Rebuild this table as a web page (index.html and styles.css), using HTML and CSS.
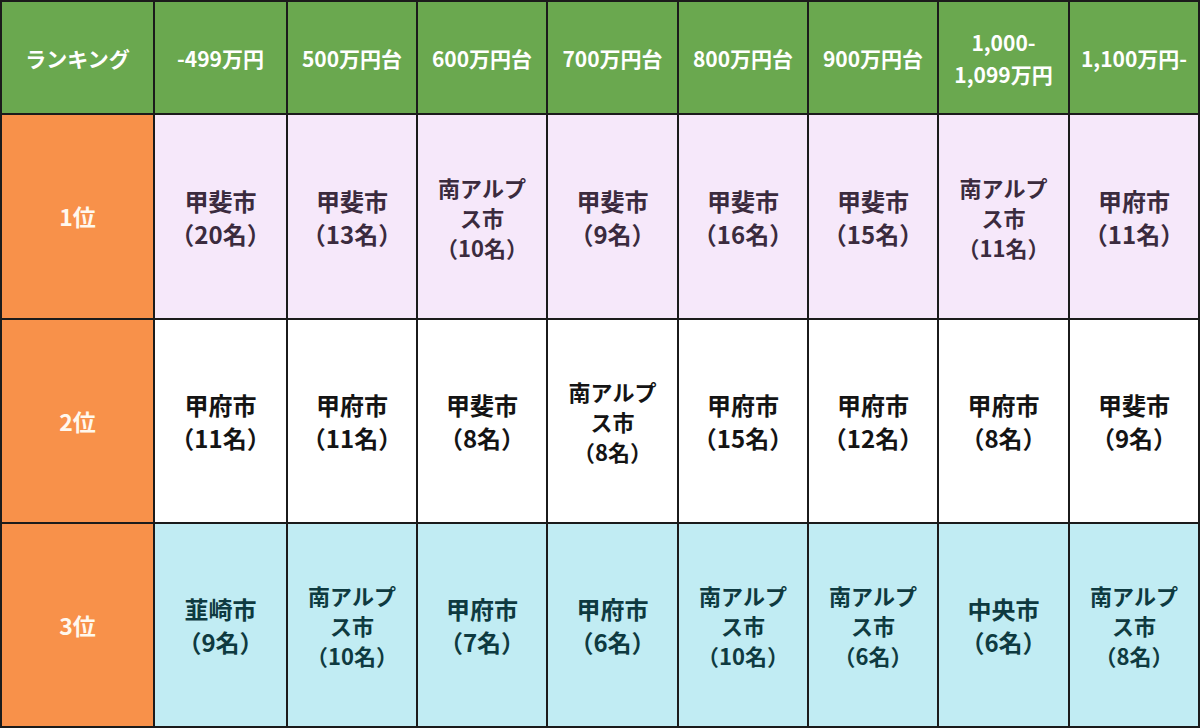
FILE: index.html
```html
<!DOCTYPE html>
<html lang="ja">
<head>
<meta charset="utf-8">
<link rel="stylesheet" href="styles.css">
</head>
<body>
<div class="table">
  <div class="cell head">ランキング</div>
  <div class="cell head">-499万円</div>
  <div class="cell head">500万円台</div>
  <div class="cell head">600万円台</div>
  <div class="cell head">700万円台</div>
  <div class="cell head">800万円台</div>
  <div class="cell head">900万円台</div>
  <div class="cell head">1,000-<br>1,099万円</div>
  <div class="cell head">1,100万円-</div>

  <div class="cell rank">1位</div>
  <div class="cell r1">甲斐市<br>（20名）</div>
  <div class="cell r1">甲斐市<br>（13名）</div>
  <div class="cell r1 three">南アルプ<br>ス市<br>（10名）</div>
  <div class="cell r1">甲斐市<br>（9名）</div>
  <div class="cell r1">甲斐市<br>（16名）</div>
  <div class="cell r1">甲斐市<br>（15名）</div>
  <div class="cell r1 three">南アルプ<br>ス市<br>（11名）</div>
  <div class="cell r1">甲府市<br>（11名）</div>

  <div class="cell rank">2位</div>
  <div class="cell r2">甲府市<br>（11名）</div>
  <div class="cell r2">甲府市<br>（11名）</div>
  <div class="cell r2">甲斐市<br>（8名）</div>
  <div class="cell r2 three">南アルプ<br>ス市<br>（8名）</div>
  <div class="cell r2">甲府市<br>（15名）</div>
  <div class="cell r2">甲府市<br>（12名）</div>
  <div class="cell r2">甲府市<br>（8名）</div>
  <div class="cell r2">甲斐市<br>（9名）</div>

  <div class="cell rank">3位</div>
  <div class="cell r3">韮崎市<br>（9名）</div>
  <div class="cell r3 three">南アルプ<br>ス市<br>（10名）</div>
  <div class="cell r3">甲府市<br>（7名）</div>
  <div class="cell r3">甲府市<br>（6名）</div>
  <div class="cell r3 three">南アルプ<br>ス市<br>（10名）</div>
  <div class="cell r3 three">南アルプ<br>ス市<br>（6名）</div>
  <div class="cell r3">中央市<br>（6名）</div>
  <div class="cell r3 three">南アルプ<br>ス市<br>（8名）</div>
</div>
</body>
</html>
```

FILE: styles.css
```css
html, body {
  margin: 0;
  padding: 0;
  background: #ffffff;
}

.table {
  width: 1200px;
  height: 728px;
  box-sizing: border-box;
  padding: 2px;
  background: #1b1b1b;
  display: grid;
  grid-template-columns: 151px 131px 128px 128px 129px 128px 128px 129px 128px;
  grid-template-rows: 111px 203px 202px 202px;
  gap: 2px;
  font-family: "Noto Sans CJK JP", "Noto Sans", sans-serif;
  font-weight: 700;
}

.cell {
  display: flex;
  align-items: center;
  justify-content: center;
  text-align: center;
  font-size: 24px;
  line-height: 33px;
}

.head {
  background: #6aa84f;
  color: #ffffff;
  font-size: 21px;
  line-height: 32px;
}

.rank {
  background: #f8914a;
  color: #fff8ee;
  font-size: 23px;
}

.r1 {
  background: #f6e8fa;
  color: #3b2b3e;
}

.r2 {
  background: #ffffff;
  color: #141414;
}

.r3 {
  background: #c1ecf3;
  color: #0e3a40;
}

.three {
  font-size: 22px;
  line-height: 30px;
}
```
